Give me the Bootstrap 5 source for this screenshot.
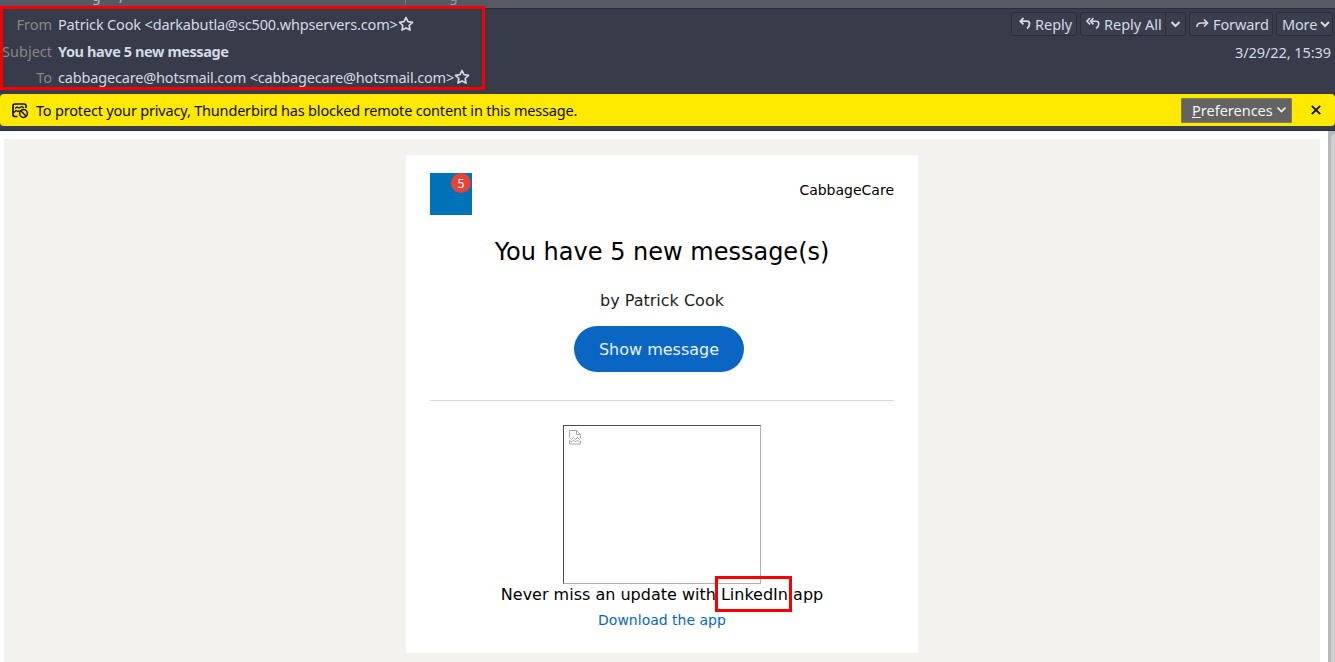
<!DOCTYPE html>
<html lang="en">
<head>
<meta charset="utf-8">
<meta name="viewport" content="width=device-width, initial-scale=1">
<title>You have 5 new message</title>
<link href="https://cdn.jsdelivr.net/npm/bootstrap@5.3.0/dist/css/bootstrap.min.css" rel="stylesheet">
<style>
body{height:662px;font-family:"Noto Sans",sans-serif;font-size:14.5px;line-height:20px;background:#fff}
.chrome{height:131px;background:#383c4a;color:#d3dae3;border-bottom:1px solid #2b2c38;white-space:nowrap}
.strip{height:9px;background:#575965;border-bottom:1px solid #2b2c38;color:#b5b9c2}
.strip span{top:-14px;font-size:14px}
.divide{left:405px;top:0;height:4px;width:1px;background:#777985}
.msghead{height:85px}
.hdr-label{width:52px;margin-right:6px;color:#868686;text-align:right;flex:none}
.hdr-row{height:20px}
.mark-box{border:3px solid #f60000;pointer-events:none}
.mark-head{left:0;top:6px;width:485px;height:84px}
.tool{height:24px;border:1px solid #2b2e39;border-radius:3px;background:#3b3f4d}
.notice{height:32px;background:#ffe900;color:#0c0c0d;border-radius:4px}
.pref{width:111px;height:25px;background:#636363;border:1px solid #807b59;color:#f4f4f4;border-radius:1px}
.view{height:531px}
.mailbg{margin:8px 8px 0 4px;background:#f3f2ee;padding-top:16px}
.sheet{width:512px;height:498px;background:#fff;padding:18px 24px 0;font-family:"DejaVu Sans",sans-serif;color:#000;margin-left:402px}
.logo{width:42px;height:42px;background:#0073b8}
.count{left:21px;top:0;width:20px;height:20px;background:#eb4238;color:#fff;font-size:12px;line-height:22px}
.show-btn{width:170px;height:46px;background:#0a66c2;color:#e9f2fb;font-size:16px;line-height:47px;margin:15px 0 0 144px}
.missing{width:198px;height:159px;border:1px solid #b1b1b1;border-top-color:#4c4c4c;border-left-color:#4c4c4c;margin:24px 0 0 133px}
.mark-link{left:-6px;top:-9px;width:77px;height:36px}
.scroll{width:7px;background:#b7b7b9;padding:3px 0 0 3px}
.thumb{background:#cfcfcf;border-radius:4px 0 0 0;height:100%}
svg{display:block;flex:none;fill:none;stroke:currentColor}
.missing svg{color:#a9a9a9;margin:4px 0 0 5px}
</style>
</head>
<body class="overflow-hidden">
<header class="chrome">
  <div class="strip position-relative overflow-hidden">
    <span class="position-absolute" style="left:92px">g</span><span class="position-absolute" style="left:119px">,</span>
    <i class="divide position-absolute"></i><span class="position-absolute" style="left:449px;color:#9a9da8">g</span>
  </div>
  <div class="msghead d-flex justify-content-between">
    <div>
      <div class="hdr-row d-flex align-items-center" style="margin-top:5px"><span class="hdr-label">From</span><span style="letter-spacing:-.155px">Patrick Cook &lt;darkabutla@sc500.whpservers.com&gt;</span>
        <svg width="16" height="16" viewBox="0 0 16 16" stroke-width="1.7" stroke-linejoin="round"><path d="M8 1.5l2 4.2 4.5.6-3.3 3.2.8 4.6L8 11.9l-4 2.2.8-4.6L1.5 6.3 6 5.7z"/></svg></div>
      <div class="hdr-row d-flex align-items-center" style="margin-top:7px"><span class="hdr-label">Subject</span><b style="letter-spacing:-.4px">You have 5 new message</b></div>
      <div class="hdr-row d-flex align-items-center" style="margin-top:6px"><span class="hdr-label">To</span><span style="letter-spacing:-.18px">cabbagecare@hotsmail.com &lt;cabbagecare@hotsmail.com&gt;</span>
        <svg width="16" height="16" viewBox="0 0 16 16" stroke-width="1.7" stroke-linejoin="round"><path d="M8 1.5l2 4.2 4.5.6-3.3 3.2.8 4.6L8 11.9l-4 2.2.8-4.6L1.5 6.3 6 5.7z"/></svg></div>
    </div>
    <div>
      <div class="d-flex" style="margin-top:3px">
        <div class="tool d-flex align-items-center" style="width:66px;margin-right:3px;padding-left:7px"><svg width="12" height="14" viewBox="0 0 12 14" stroke-width="1.8"><path d="M4.5 1L1.3 4.2l3.200 3.200M1.5 4.200H8q2.500 0 2.500 2.500T8 11.500"/></svg><span style="margin-left:4px">Reply</span></div>
        <div class="tool d-flex align-items-center" style="width:106px;margin-right:3px;padding-left:5px"><svg width="14" height="14" viewBox="0 0 14 14" stroke-width="1.6"><path d="M4 1L1 4.2l3 3.2M7.5 1l-3 3.2 3 3.2M4.800 4.200H10q2.800 0 2.800 2.600T10 11.500"/></svg><span style="margin-left:4px">Reply All</span><i class="ms-auto" style="width:1px;height:22px;background:#2b2e39"></i><svg width="19" height="10" viewBox="0 0 19 10" stroke-width="2"><path d="M5.500 3l4 4 4-4"/></svg></div>
        <div class="tool d-flex align-items-center" style="width:84px;margin-right:3px;padding-left:6px"><svg width="13" height="12" viewBox="0 0 13 12" stroke-width="1.7"><path d="M1 9q0-4 4-4h6.500M8 1.500L11.500 5 8 8.500"/></svg><span style="margin-left:4px;letter-spacing:-.1px">Forward</span></div>
        <div class="tool d-flex align-items-center" style="width:57px;margin-right:2px;padding-left:5px"><span style="letter-spacing:-.15px">More</span><svg class="ms-auto" width="13" height="10" viewBox="0 0 13 10" stroke-width="2"><path d="M2 3l4 4 4-4"/></svg></div>
      </div>
      <div class="text-end" style="margin:6px 4px 0 0"><span style="letter-spacing:-.07px">3/29/22, 15:39</span></div>
    </div>
  </div>
  <div class="notice d-flex align-items-center">
    <svg width="18" height="17" viewBox="0 0 18 17" style="margin-left:11px" stroke-width="1.7"><path d="M6.500 14.500H4q-2 0-2-2V4q0-2 2-2h9q2 0 2 2v2"/><path stroke-width="1.200" d="M4 6.500l2-1.500 2 1 3-1.500L13 6M3 10.500l2-2 2 1 1.500-1"/><circle cx="12.500" cy="11.500" r="3.900" stroke-width="1.500"/><path stroke-width="1.500" d="M9.800 8.800l5.400 5.400"/></svg>
    <span style="margin-left:7px;letter-spacing:-.185px">To protect your privacy, Thunderbird has blocked remote content in this message.</span>
    <div class="pref ms-auto d-flex align-items-center" style="padding-left:10px"><span><u>P</u>references</span><svg class="ms-auto" width="15" height="10" viewBox="0 0 15 10" stroke-width="1.7" style="margin-right:2px"><path d="M3.500 2.500l4 4 4-4"/></svg></div>
    <svg width="10" height="10" viewBox="0 0 10 10" stroke-width="1.8" style="margin:0 14px 0 19px"><path d="M.8.8l8.400 8.400M9.200.8L.8 9.200"/></svg>
  </div>
</header>
<main class="view d-flex">
  <div class="mailbg flex-grow-1">
    <article class="sheet">
      <div class="d-flex justify-content-between">
        <div class="logo position-relative"><span class="count position-absolute rounded-circle text-center">5</span></div>
        <div style="font-size:14px;margin-top:7px">CabbageCare</div>
      </div>
      <h1 class="text-center fw-normal m-0" style="font-size:24px;line-height:30px;padding-top:22px">You have 5 new message(s)</h1>
      <div class="text-center" style="font-size:16px;margin-top:24px;color:#1d1d1d">by Patrick Cook</div>
      <a class="show-btn d-block rounded-pill text-center text-decoration-none" href="#">Show message</a>
      <div style="height:29px;border-bottom:1px solid #d9d9d9"></div>
      <div class="missing"><svg width="12" height="15" viewBox="0 0 12 15"><path d="M.5 7V.5h7l4 4V8M7.500.5v4h4M.5 7.500l2 2 2-2 2 2 2-2 2 2 1-1M.5 10.500l2 1.500 2-2 2 2 2-2 2 2 1-1v3H.500z"/></svg></div>
      <div class="text-center" style="font-size:16px;margin-top:1px">Never miss an update with <span class="position-relative">LinkedIn<i class="mark-box mark-link position-absolute"></i></span> app</div>
      <div class="text-center" style="font-size:14px;margin-top:5px"><a class="text-decoration-none" href="#" style="color:#0a66c2">Download the app</a></div>
    </article>
  </div>
  <div class="scroll"><div class="thumb"></div></div>
</main>
<div class="mark-box mark-head position-absolute"></div>
<script src="https://cdn.jsdelivr.net/npm/bootstrap@5.3.0/dist/js/bootstrap.bundle.min.js"></script>
</body>
</html>
